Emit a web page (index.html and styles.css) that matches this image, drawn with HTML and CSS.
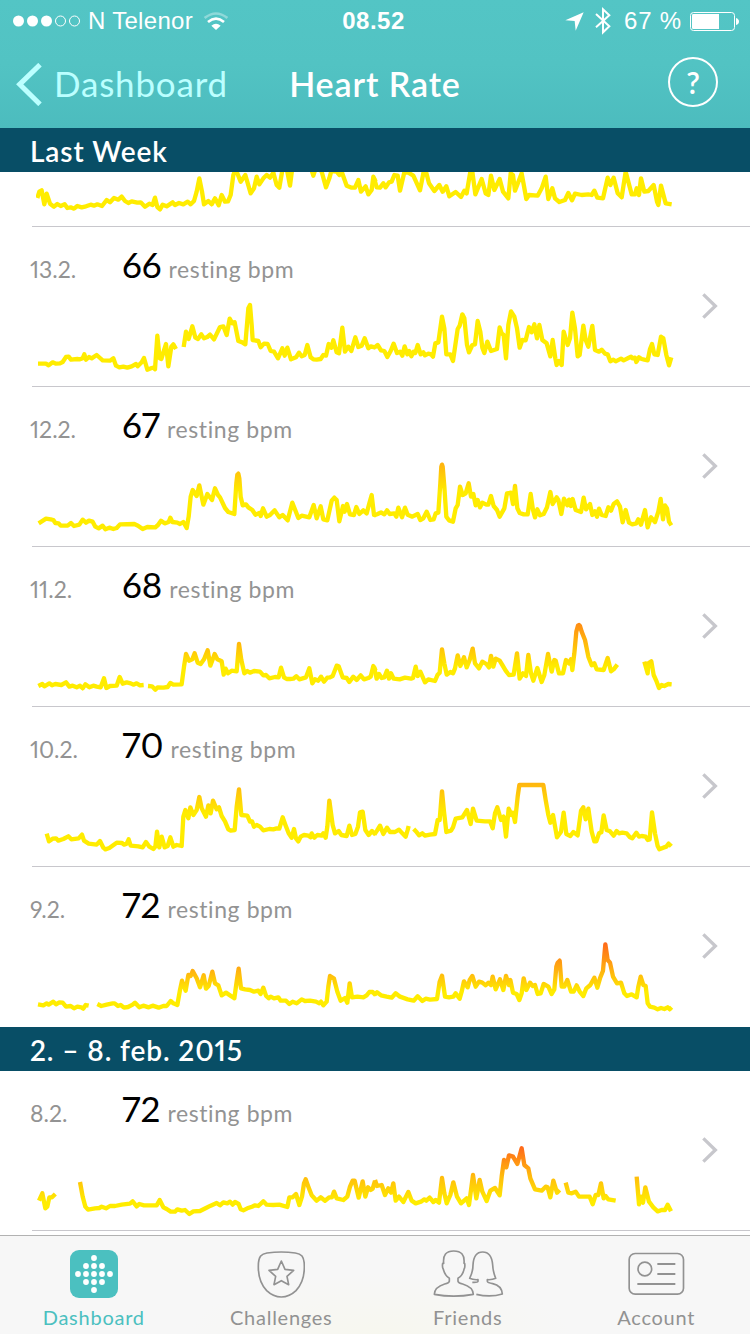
FILE: index.html
```html
<!DOCTYPE html>
<html lang="en">
<head>
<meta charset="utf-8">
<title>Heart Rate</title>
<link rel="stylesheet" href="styles.css">
</head>
<body>
<svg class="defs" width="0" height="0" aria-hidden="true">
  <defs>
    <symbol id="chevron" viewBox="0 0 48 78"><path d="M4 4 40 39 4 74" fill="none" stroke="#c7c7cc" stroke-width="10"/></symbol>
    <linearGradient id="heat-12" gradientUnits="userSpaceOnUse" x1="0" x2="0" y1="190" y2="275"><stop offset="0" stop-color="#ffb30f"/><stop offset="1" stop-color="#ffec00"/></linearGradient>
    <linearGradient id="heat-11" gradientUnits="userSpaceOnUse" x1="0" x2="0" y1="670" y2="800"><stop offset="0" stop-color="#ff8c14"/><stop offset="1" stop-color="#ffec00"/></linearGradient>
    <linearGradient id="heat-10" gradientUnits="userSpaceOnUse" x1="0" x2="0" y1="190" y2="280"><stop offset="0" stop-color="#ffb60f"/><stop offset="1" stop-color="#ffec00"/></linearGradient>
    <linearGradient id="heat-9" gradientUnits="userSpaceOnUse" x1="0" x2="0" y1="670" y2="815"><stop offset="0" stop-color="#ff6a1a"/><stop offset=".55" stop-color="#ffb010"/><stop offset="1" stop-color="#ffec00"/></linearGradient>
    <linearGradient id="heat-8" gradientUnits="userSpaceOnUse" x1="0" x2="0" y1="203" y2="365"><stop offset="0" stop-color="#ff6a1a"/><stop offset=".55" stop-color="#ffbe0c"/><stop offset="1" stop-color="#ffec00"/></linearGradient>
  </defs>
</svg>
<div class="screen">
  <header class="top">
    <div class="status">
      <div class="status-left">
        <svg width="68" height="12" viewBox="0 0 68 12"><g fill="#fff"><circle cx="5.5" cy="6" r="5.5"/><circle cx="19.5" cy="6" r="5.5"/><circle cx="33.5" cy="6" r="5.5"/></g><g fill="none" stroke="#fff"><circle cx="47.5" cy="6" r="5"/><circle cx="61.5" cy="6" r="5"/></g></svg>
        <span class="carrier">N Telenor</span>
        <svg class="wifi" width="24" height="18" viewBox="0 0 72 54"><g fill="none" stroke="#fff" stroke-width="8"><path d="M2 18Q36 -9 70 18" opacity=".35"/><path d="M12 30Q36 10 60 30"/></g><path d="M22 41Q36 29 50 41L36 54Z" fill="#fff"/></svg>
      </div>
      <span class="clock">08.52</span>
      <div class="status-right">
        <svg width="19" height="19" viewBox="0 0 57 57"><path d="M56 1 32 56 29 27 1 25Z" fill="#fff"/></svg>
        <svg class="bt" width="16" height="28" viewBox="0 0 48 84"><path d="M3 21 43 58 24 76V7L43 25 3 61" fill="none" stroke="#fff" stroke-width="6"/></svg>
        <span class="percent">67 %</span>
        <svg width="49" height="19" viewBox="0 0 147 57"><rect x="1.5" y="1.5" width="132" height="54" rx="9" fill="none" stroke="#fff" stroke-width="3"/><path d="M6 10q0-4 4-4H87V51H10q-4 0-4-4Z" fill="#fff"/><path d="M138 18q9 3 9 10.500t-9 10.500Z" fill="#fff"/></svg>
      </div>
    </div>
    <nav class="nav">
      <div class="back">
        <svg width="26" height="43" viewBox="0 0 78 129"><path d="M72 5 11 64 72 124" fill="none" stroke="#bff" stroke-width="15"/></svg>
        <span>Dashboard</span>
      </div>
      <h1 class="title">Heart Rate</h1>
      <div class="help">?</div>
    </nav>
  </header>

  <main class="list">
    <h2 class="section">Last Week</h2>
    <article class="day day-cut">
      <svg class="chart" viewBox="108 36 1920 255"><g class="line">
        <path d="M112,219 L118,200 125,196 133,238 140,206 150,236 162,245 172,237 182,243 194,238 202,249 212,247 222,251 232,243 245,247 258,244 272,239 282,242 292,238 306,243 320,225 330,232 342,219 355,224 365,215 375,228 385,234 395,229 412,233 422,232 435,245 448,236 458,240 465,218 472,246 480,253 488,239 500,244 518,232 525,240 537,234 550,238 563,230 572,238 582,228 590,200 598,160 606,200 612,238 625,228 635,238 645,220 656,241 665,210 675,230 684,229 692,210 700,150 704,140 710,140 722,170 736,150 752,205 762,190 770,155 778,178 790,160 800,150 810,158 820,143 830,180 838,188 848,130 860,130 870,182 878,120 L930,120 940,152 950,120 965,140 978,187 988,160 994,138 1010,140 1018,150 1025,140 1040,182 1055,188 1065,188 1075,165 1083,200 1097,184 1105,208 1115,195 1120,155 1127,170"/>
        <path transform="translate(1125)" d="M-2,162 L5,187 15,188 25,175 32,187 42,172 50,170 58,150 68,152 75,197 88,142 100,143 115,152 135,196 146,140 153,140 162,175 178,198 193,180 203,200 214,184 223,214 242,201 258,216 268,197 275,205 286,140 292,140 301,208 320,162 332,205 340,210 348,152 358,195 374,162 384,200 400,220 407,145 414,150 420,197 440,145 454,222 462,210 488,212 500,190 512,155 520,222 532,190 540,220 553,231 570,225 580,204 591,226 600,206 620,210 640,208 650,210 658,197 667,218 684,220 698,158 706,180 716,158 728,205 740,217 752,140 770,208 780,208 785,190 792,210 798,160 808,200 820,198 836,180 846,230 850,240 858,182 872,235 890,238"/>
      </g></svg>
    </article>
    <article class="day">
      <div class="facts"><span class="date">13.2.</span><span class="bpm">66</span><span class="unit">resting bpm</span></div>
      <svg class="chart" viewBox="108 516 1920 255"><g class="line">
        <path d="M114,716 L138,716 146,721 158,712 168,716 180,715 188,711 198,696 206,695 213,704 232,702 240,703 248,700 253,688 258,704 267,696 275,700 290,690 300,699 308,706 330,707 340,700 348,722 358,727 370,725 382,728 395,724 408,717 413,724 425,712 432,699 442,734 455,729 460,728 465,733 472,632 479,700 484,702 498,657 505,724 514,665 520,658 528,672 M551,666 L558,620 566,642 577,604 586,638 594,642 604,628 612,640 622,636 630,629 642,643 660,606 670,604 680,630 689,581 697,595 704,592 715,648 727,652 736,658 745,550 750,540 755,600 758,645 775,648 782,667 792,656 803,657 812,678 822,680 834,700 847,670 854,692 862,668 873,703 888,697 897,683 905,694 914,690 922,660 932,697 940,703 950,704 962,702 970,690 978,692 986,657 994,668 1000,646 1010,682 1017,685 1027,608 1035,680 1045,665 1054,678 1066,637 1075,666 1085,662 1094,640 1105,670 1112,664 1127,668"/>
        <path transform="translate(1125)" d="M-2,668 L8,660 18,676 28,678 37,696 47,678 56,656 66,684 75,680 82,692 89,664 97,688 103,678 109,694 116,680 121,684 128,660 137,688 145,682 150,691 160,686 168,688 174,695 181,655 190,652 201,575 208,610 214,688 226,688 234,708 248,612 254,602 262,568 268,580 276,660 282,682 292,660 300,658 308,588 316,620 322,668 328,684 337,650 348,678 366,672 374,607 380,625 386,630 393,700 400,600 408,559 418,575 426,610 434,668 442,645 452,646 462,606 470,622 478,598 486,640 493,600 502,645 515,655 526,694 533,645 541,700 545,720 552,708 560,720 566,620 578,660 585,640 592,563 600,610 608,694 614,690 625,602 632,645 640,665 652,603 660,675 672,680 680,674 690,686 698,688 706,709 715,704 722,709 738,701 746,706 760,699 768,695 772,700 780,698 784,711 792,697 800,702 808,704 818,706 825,672 831,657 838,688 848,690 858,635 865,640 874,690 882,721 889,697"/>
      </g></svg>
      <svg class="go"><use href="#chevron"/></svg>
    </article>
    <article class="day">
      <div class="facts"><span class="date">12.2.</span><span class="bpm">67</span><span class="unit">resting bpm</span></div>
      <svg class="chart" viewBox="108 171 1920 255"><g class="line" stroke="url(#heat-12)">
        <path d="M116,370 L138,356 152,358 160,360 166,369 176,370 182,377 203,377 213,369 222,378 238,374 248,359 258,368 267,362 278,365 286,380 296,385 308,377 316,388 328,383 340,387 350,384 360,373 403,372 414,377 428,387 442,381 466,382 474,375 483,362 494,370 506,366 511,353 517,366 532,368 540,372 550,366 560,384 566,350 572,290 578,270 590,288 598,256 610,314 622,282 636,300 645,265 654,285 660,292 675,324 685,336 703,342 709,250 712,224 715,221 718,235 722,290 728,316 738,313 745,322 757,330 766,344 780,338 782,348 789,325 800,350 810,345 824,331 838,352 848,345 863,361 877,308 895,354 905,347 928,352 941,315 950,355 962,319 970,358 982,361 995,302 1003,293 1010,300 1018,364 1029,318 1034,335 1041,312 1050,343 1062,345 1069,321 1078,342 1090,331 1100,340 1108,310 1115,285 1122,345 1127,346"/>
        <path transform="translate(1125)" d="M-2,346 L8,342 18,337 28,343 36,331 44,342 58,340 64,350 70,323 81,352 90,323 98,344 112,350 128,342 136,360 145,355 155,335 166,360 176,358 182,340 190,338 196,250 199,200 201,194 203,200 208,260 214,350 222,361 234,365 242,325 248,315 255,260 263,285 272,280 281,250 288,290 295,282 302,316 308,300 315,322 322,308 334,314 340,314 348,288 356,318 366,330 374,350 388,325 396,280 408,278 414,312 420,258 427,325 434,339 446,343 458,343 467,282 474,330 480,352 487,328 495,346 506,342 516,322 526,276 533,312 545,292 550,300 559,342 567,296 577,316 582,299 588,318 593,297 602,330 618,336 626,293 633,328 645,312 652,345 660,334 666,350 672,326 680,345 692,348 700,322 708,332 716,312 726,304 735,320 743,367 752,330 762,368 772,373 784,370 790,358 798,374 810,330 818,382 828,352 840,366 850,335 857,297 864,358 870,316 876,325 882,365 889,376"/>
      </g></svg>
      <svg class="go"><use href="#chevron"/></svg>
    </article>
    <article class="day">
      <div class="facts"><span class="date">11.2.</span><span class="bpm">68</span><span class="unit">resting bpm</span></div>
      <svg class="chart" viewBox="108 651 1920 255"><g class="line" stroke="url(#heat-11)">
        <path d="M115,858 L127,852 133,859 148,850 156,856 166,852 184,855 198,847 208,860 218,857 230,862 240,857 248,865 256,853 268,862 280,857 290,860 302,862 312,835 319,864 330,858 350,857 359,831 368,851 380,847 392,850 400,854 410,850 420,856 431,855 M444,858 L456,859 466,869 473,862 490,863 503,861 511,849 520,854 545,853 552,800 558,762 567,782 577,778 584,760 593,788 602,792 612,778 623,751 631,797 644,762 652,778 665,784 671,824 677,806 684,820 695,812 710,814 717,732 724,780 733,820 742,813 750,818 762,813 780,815 790,826 798,825 808,835 825,831 836,832 843,803 852,832 860,837 870,837 880,836 889,829 898,838 908,835 918,832 928,805 937,850 945,838 955,842 963,830 972,845 982,833 990,832 998,828 1010,797 1016,799 1028,832 1040,834 1048,846 1060,830 1070,840 1082,826 1092,838 1105,834 1112,830 1120,798 1127,812"/>
        <path transform="translate(1125)" d="M-3,800 L5,836 12,822 20,834 28,832 36,812 42,836 48,820 56,836 74,838 90,833 108,836 114,834 122,800 128,828 136,815 150,847 160,838 180,843 188,824 194,818 201,748 208,790 215,824 226,816 234,820 240,805 248,766 256,798 267,772 275,802 284,780 293,746 300,790 312,805 322,785 334,792 342,802 348,768 355,800 362,776 374,782 382,795 392,812 402,825 416,824 426,760 434,836 444,820 453,828 460,765 468,820 475,842 487,804 500,846 508,825 519,762 530,815 538,780 542,782 552,820 564,820 573,780 582,790 588,778 592,810 598,760 604,695 609,677 612,675 615,678 620,695 630,720 640,770 650,796 658,790 665,808 686,810 698,774 708,814 716,808 727,794 M808,785 L818,820 820,790 829,784 836,825 845,845 852,864 860,855 868,858 880,852 890,853"/>
      </g></svg>
      <svg class="go"><use href="#chevron"/></svg>
    </article>
    <article class="day">
      <div class="facts"><span class="date">10.2.</span><span class="bpm">70</span><span class="unit">resting bpm</span></div>
      <svg class="chart" viewBox="108 171 1920 255"><g class="line" stroke="url(#heat-10)">
        <path d="M140,341 L147,364 158,356 168,355 175,362 190,357 205,349 214,358 236,355 246,344 252,362 266,371 290,374 300,363 310,383 316,388 328,384 350,368 366,369 372,374 380,371 386,358 392,377 415,379 428,382 438,366 448,380 460,387 466,380 471,335 478,382 485,350 494,382 503,378 511,352 520,380 530,375 545,378 550,290 556,270 565,295 571,262 580,285 590,270 598,231 605,265 618,290 625,256 632,280 639,242 650,268 657,262 665,288 675,304 685,328 692,332 704,330 710,260 717,208 724,285 742,287 750,305 756,304 762,320 770,315 780,320 790,331 808,327 820,328 830,325 838,326 848,292 856,314 866,340 875,353 882,327 888,355 895,364 902,350 912,345 925,347 932,352 935,340 943,353 952,345 965,347 970,340 977,353 982,320 988,242 998,315 1005,340 1016,333 1024,345 1040,348 1048,317 1056,345 1066,342 1074,320 1080,277 1088,275 1096,330 1106,345 1116,333 1127,344"/>
        <path transform="translate(1125)" d="M-2,344 L6,332 15,317 25,342 36,323 45,336 60,336 72,329 82,340 92,350 98,330 101,318 M116,327 L124,335 132,346 142,340 150,347 165,344 180,342 188,300 194,300 201,214 207,275 214,336 228,332 234,322 242,296 262,292 276,270 287,312 294,266 305,302 330,304 345,304 353,325 360,280 367,262 378,300 386,290 393,350 401,266 410,285 414,278 420,306 428,230 433,195 505,195 512,240 520,285 526,308 534,285 546,352 558,335 566,278 574,342 586,348 595,336 608,346 618,272 625,262 632,298 640,266 650,335 658,364 664,364 672,340 679,337 686,286 695,330 705,334 716,347 725,333 732,340 742,338 755,340 765,352 772,355 784,338 792,350 800,348 812,350 818,360 824,358 831,277 840,340 848,378 853,388 865,383 874,380 881,371 889,379"/>
      </g></svg>
      <svg class="go"><use href="#chevron"/></svg>
    </article>
    <article class="day day-last">
      <div class="facts"><span class="date">9.2.</span><span class="bpm">72</span><span class="unit">resting bpm</span></div>
      <svg class="chart" viewBox="108 651 1920 255"><g class="line" stroke="url(#heat-9)">
        <path d="M114,853 L130,856 140,850 146,854 160,845 168,853 178,847 188,848 198,860 212,858 222,865 232,860 244,862 250,866 257,855 266,857 M292,852 L304,858 320,854 338,850 344,850 354,858 362,855 372,863 384,861 398,854 405,848 418,862 430,857 446,862 458,857 476,863 490,858 500,858 512,843 520,850 532,855 540,810 546,782 557,812 565,765 572,768 578,753 590,775 600,802 611,766 618,806 626,798 637,755 645,790 655,796 665,826 678,818 690,826 703,835 710,785 716,746 723,805 735,808 750,810 762,815 775,812 782,822 790,803 798,827 806,835 812,830 822,835 835,832 842,842 858,842 868,852 878,845 890,850 905,838 915,843 930,842 948,845 958,850 963,845 970,856 980,845 985,800 990,768 1002,776 1012,815 1022,842 1035,834 1042,848 1049,790 1056,832 1072,830 1090,832 1100,826 1108,816 1118,816 1127,826"/>
        <path transform="translate(1125)" d="M-2,825 L6,817 18,826 35,830 50,833 62,820 75,830 98,838 116,842 128,829 142,843 152,836 165,839 186,837 194,785 201,767 210,830 222,832 235,830 242,820 254,836 260,815 267,784 278,802 284,780 292,768 302,800 312,785 322,788 332,796 340,788 348,795 353,770 362,808 375,778 385,810 393,768 402,795 406,780 414,818 425,822 433,840 440,820 446,775 454,810 465,788 473,798 480,795 488,822 497,820 506,792 520,800 530,822 538,808 544,740 548,728 554,722 560,800 568,800 577,780 588,815 596,815 605,796 614,815 625,828 634,805 646,795 658,773 667,803 675,775 684,752 691,673 698,720 705,728 714,770 726,790 738,788 748,820 756,828 770,823 785,832 790,800 797,770 805,795 812,798 818,850 825,860 838,863 848,868 858,864 868,867 878,862 884,868 890,862"/>
      </g></svg>
      <svg class="go"><use href="#chevron"/></svg>
    </article>
    <h2 class="section">2. – 8. feb. 2015</h2>
    <article class="day">
      <div class="facts"><span class="date">8.2.</span><span class="bpm">72</span><span class="unit">resting bpm</span></div>
      <svg class="chart" viewBox="108 183 1920 255"><g class="line" stroke="url(#heat-8)">
        <path d="M117,362 L127,340 136,385 142,380 148,352 156,352 166,342 M240,306 L248,350 256,380 264,389 285,385 298,384 305,380 318,385 330,378 345,378 365,374 390,371 398,364 410,379 418,372 432,376 470,376 479,360 490,382 500,387 512,395 525,395 532,388 545,392 555,390 568,402 580,394 600,393 618,384 632,377 650,369 660,376 670,367 682,370 690,365 698,374 705,366 716,372 722,388 730,391 742,385 756,380 765,376 775,378 790,364 800,374 820,375 838,374 862,381 868,352 878,352 888,342 898,375 906,350 912,310 917,298 925,320 935,346 950,362 962,352 975,362 988,352 996,352 1002,335 1010,355 1030,360 1042,350 1050,320 1058,302 1064,302 1076,353 1088,304 1096,350 1104,322 1112,330 1118,326 1125,303"/>
        <path transform="translate(1125)" d="M0,300 L6,318 20,315 30,345 40,325 48,338 55,310 62,362 72,350 85,366 100,336 110,362 122,370 138,365 148,358 154,362 164,353 175,366 182,360 192,368 201,294 208,340 215,370 226,345 235,307 246,350 258,370 275,355 282,375 294,285 304,355 314,300 322,335 335,363 346,332 360,324 374,346 380,290 387,240 394,262 402,226 414,230 427,252 440,205 448,255 460,265 466,295 480,328 500,332 512,320 518,322 526,352 535,302 546,338 554,330 M572,308 L580,338 590,340 602,335 612,350 630,350 644,350 653,373 662,345 670,345 678,310 686,355 692,348 700,358 722,362 M785,290 L792,373 798,350 804,368 811,322 822,365 835,382 848,394 860,390 870,390 878,374 888,394"/>
      </g></svg>
      <svg class="go"><use href="#chevron"/></svg>
    </article>
  </main>

  <footer class="tabs">
    <div class="tab tab-active">
      <svg width="48" height="48" viewBox="0 0 48 48"><rect width="48" height="48" rx="9" fill="#4bc0c0"/><g fill="#fff"><circle cx="24" cy="8" r="2.900"/><circle cx="16" cy="16" r="2.900"/><circle cx="24" cy="16" r="2.900"/><circle cx="32" cy="16" r="2.900"/><circle cx="8" cy="24" r="2.900"/><circle cx="16" cy="24" r="2.900"/><circle cx="24" cy="24" r="2.900"/><circle cx="32" cy="24" r="2.900"/><circle cx="40" cy="24" r="2.900"/><circle cx="16" cy="32" r="2.900"/><circle cx="24" cy="32" r="2.900"/><circle cx="32" cy="32" r="2.900"/><circle cx="24" cy="40" r="2.900"/></g></svg>
      <span class="label">Dashboard</span>
    </div>
    <div class="tab">
      <svg width="48" height="48" viewBox="773 510 144 144"><g fill="none" stroke="#929292" stroke-width="5" stroke-linejoin="round"><path d="M784 528Q790 521 803 519Q846 513 888 519Q902 521 908 528Q915 537 915 558Q916 604 890 632Q870 651 846 651Q822 651 802 632Q776 604 777 558Q777 537 784 528Z"/><path d="M846 543 857 568 883 571 863 589 868 614 846 602 824 614 829 589 809 571 835 568Z"/></g></svg>
      <span class="label">Challenges</span>
    </div>
    <div class="tab">
      <svg width="72" height="48" viewBox="173 510 216 144"><g fill="none" stroke="#929292" stroke-width="5" stroke-linejoin="round"><path d="M222 595V604Q221 609 208 612Q178 621 177 643Q235 654 294 643Q293 621 262 612Q249 609 248 604V595Q262 587 266 568Q270 562 268 550H266Q270 513 235 513Q201 513 205 550H202Q200 562 204 568Q209 587 222 595Z"/><path d="M291 607Q307 608 308 604V599Q293 600 283 595Q293 575 293 555Q295 516 322 516Q349 516 352 555Q353 575 361 595Q351 600 336 599V604Q337 608 352 611Q379 617 381 642Q345 653 303 643"/></g></svg>
      <span class="label label-friends">Friends</span>
    </div>
    <div class="tab">
      <svg width="57" height="48" viewBox="758 510 171 144"><g fill="none" stroke="#929292" stroke-width="5"><rect x="761.500" y="520.500" width="163" height="122" rx="18"/><circle cx="808.500" cy="567" r="20.500"/><path d="M846 552H900M846 582H900M786 612H900" stroke-width="5.500"/></g></svg>
      <span class="label">Account</span>
    </div>
  </footer>
</div>
</body>
</html>
```
FILE: styles.css
```css
* { box-sizing: border-box; }
body { margin: 0; font-family: Lato, "Noto Sans", sans-serif; font-variant-numeric: proportional-nums; }
svg { display: block; flex: none; }
.defs { position: absolute; }
.screen { width: 750px; height: 1334px; display: flex; flex-direction: column; overflow: hidden; background: #fff; }

.top { height: 128px; flex: none; color: #fff; background: linear-gradient(#53c5c5, #52c3c3 50%, #4cbcbe); }
.status { height: 40px; display: grid; grid-template-columns: 1fr auto 1fr; align-items: center; padding: 0 11px 0 13px; font: 24px/40px "Liberation Sans", Arial, sans-serif; }
.status-left, .status-right { display: flex; align-items: center; height: 40px; padding-top: 1px; }
.status-right { justify-content: flex-end; }
.carrier { margin-left: 7px; letter-spacing: .3px; }
.wifi { margin-left: 11px; }
.clock { font-weight: bold; letter-spacing: .5px; padding-top: 1px; margin-right: 5px; }
.bt { margin: 0 13px 0 11px; }
.percent { margin-right: 8px; letter-spacing: .8px; }
.nav { height: 88px; display: grid; grid-template-columns: 1fr auto 1fr; align-items: center; padding: 0 16px; }
.back { display: flex; align-items: center; gap: 12px; color: #bff; font-size: 35px; line-height: 43px; letter-spacing: .8px; }
.back span { padding-bottom: 1px; }
.title { margin: 0; padding-bottom: 1px; font-size: 34px; line-height: 43px; font-weight: 600; letter-spacing: .9px; }
.help { justify-self: end; width: 50px; height: 50px; margin: -4px 16px 0 0; border: 2px solid #fff; border-radius: 50%; font-size: 30px; line-height: 46px; font-weight: 600; text-align: center; }

.list { flex: none; height: 1107px; overflow: hidden; }
.section { margin: 0; height: 44px; padding-left: 30px; background: #084e66; color: #fff; font-size: 28px; line-height: 46px; font-weight: 600; letter-spacing: .9px; }
.day { height: 160px; display: grid; grid-template: 70px 85px / 36px 640px 1fr; background: linear-gradient(#c8c7cc, #c8c7cc) 32px 100% / 718px 1px no-repeat; }
.day-cut { height: 55px; grid-template-rows: 50px; align-items: end; overflow: hidden; }
.day-last { background: none; }
.facts { grid-area: 1 / 1 / 2 / 4; display: flex; align-items: baseline; padding: 15px 0 0 30px; color: #939393; font-size: 23px; line-height: 44px; }
.date { width: 92px; }
.bpm { color: #000; font-size: 35px; margin-right: 7px; }
.unit { letter-spacing: .6px; }
.chart { grid-column: 2; width: 640px; height: 85px; }
.line { fill: none; stroke-width: 13; stroke-linejoin: round; }
.line:not([stroke]) { stroke: #ffec00; }
.go { grid-area: 1 / 3 / 3 / 4; width: 16px; height: 26px; margin: 66px 0 0 26px; }

.tabs { flex: none; height: 99px; display: grid; grid-template-columns: repeat(4, 1fr); border-top: 1px solid #b2b2b2; padding-top: 14px; background: radial-gradient(ellipse 190px 60px at 380px 100%, #f7f7ef, #f7f7f7); color: #929292; }
.tab { display: flex; flex-direction: column; align-items: center; }
.label { margin-top: 7px; font-size: 20px; line-height: 24px; letter-spacing: .75px; }
.label-friends { margin-right: 2px; }
.tab-active { color: #4bc0c0; }
```
